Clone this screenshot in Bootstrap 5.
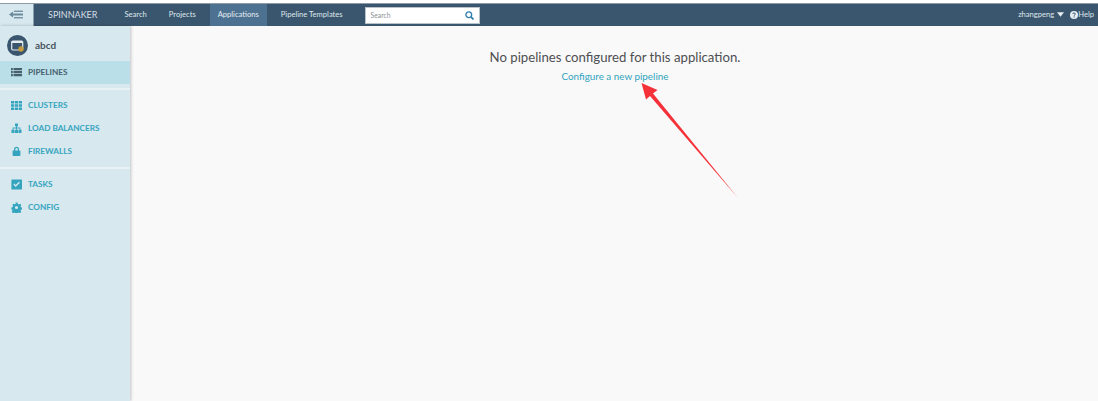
<!DOCTYPE html>
<html lang="en"><head><meta charset="utf-8"><title>Spinnaker</title>
<link rel="stylesheet" href="https://cdn.jsdelivr.net/npm/bootstrap@5.3.0/dist/css/bootstrap.min.css">
<style>
html,body{height:100%;margin:0;overflow:hidden;background:#fff;font-family:"Lato",sans-serif}
.shell{height:401px;padding-top:3px;position:relative}
.topbar{height:23px;background:#3a566e;border-top:1px solid #8b9aa6}
.toggler{width:34px;background:#d7e8ee;margin-top:-1px;border-right:1px solid #8aa0ae}
.brand{font-size:9px;color:#d5dee5;margin:0 16px 0 14px}
.topitem{font-size:7.6px;color:#dfe6eb;padding:0 8px;margin:0 3px;display:flex;align-items:center;height:100%;text-decoration:none}
.topitem.on{background:#4c7191;color:#e6edf2}
.searchbox{width:115px;height:17px;background:#fff;margin-left:11px;border:1px solid #b7c2ca;padding:0 5px;font-size:6.8px;color:#8b8f93}
.userbox{font-size:7.6px;color:#dfe6eb;margin-left:auto;padding-right:4px;gap:3px}
.helpmark{margin-left:3px;margin-right:-3px}
.bodyrow{height:375px}
.sidemenu{width:130px;background:#d7e8ee;box-shadow:1px 0 3px rgba(0,0,0,.22);z-index:1;flex:none}
.apphead{height:35px;padding:9px 0 0 7px;gap:7px;font-size:10px;font-weight:700;color:#4a5760}
.appicon{width:21px;height:21px;border-radius:50%;background:#3a566e}
.sideitem{height:23px;padding-left:11px;gap:6px;font-size:8.2px;font-weight:700;color:#35a5bf;text-decoration:none}
.sideitem.on{background:#badfe8;color:#47606f}
.sideitem svg{width:11px;height:11px;flex:none;fill:currentColor}
.rule{height:2px;background:#e8f2f5;margin:4px 0}
.mainpane{background:#f9f9f9;position:relative;padding-left:2px}
.emptymsg{font-size:13.2px;color:#4d4f52;padding-top:21px;line-height:20px}
.newlink{font-size:9.85px;color:#2fa3bd;text-decoration:none;line-height:16px;margin-top:1px}
.arrowmark{position:absolute;left:510px;top:55px;width:100px;height:120px}
</style></head>
<body>
<div class="shell">
<nav class="topbar d-flex align-items-center">
  <div class="toggler h-100 d-flex align-items-center justify-content-center flex-none">
    <svg width="15" height="9" viewBox="0 0 15 9" fill="#6b8a9c"><path d="M0 4.500 4 1.500V3.600H14V5.400H4V7.500Z"/><rect x="5" y="0.600" width="9" height="1.300"/><rect x="5" y="7.100" width="9" height="1.300"/></svg>
  </div>
  <span class="brand">SPINNAKER</span>
  <a class="topitem" href="#">Search</a>
  <a class="topitem" href="#">Projects</a>
  <a class="topitem on" href="#">Applications</a>
  <a class="topitem" href="#">Pipeline Templates</a>
  <div class="searchbox d-flex align-items-center justify-content-between">
    <span>Search</span>
    <svg width="9" height="9" viewBox="0 0 10 10" fill="none" stroke="#2f7fb0" stroke-width="1.5"><circle cx="4.200" cy="4.200" r="3.200"/><path d="M6.600 6.600 9.400 9.400" stroke-width="2"/></svg>
  </div>
  <div class="userbox d-flex align-items-center">
    <span>zhangpeng</span>
    <svg width="7" height="5" viewBox="0 0 8 5" fill="#e6edf2"><path d="M0 0H8L4 5Z"/></svg>
    <svg class="helpmark" width="8" height="8" viewBox="0 0 10 10"><circle cx="5" cy="5" r="5" fill="#e6edf2"/><path d="M3.400 3.800C3.500 2.800 4.200 2.400 5 2.400 6 2.400 6.700 3 6.700 3.800 6.700 4.900 5.100 4.900 5.100 6" fill="none" stroke="#3a566e" stroke-width="1.200"/><rect x="4.400" y="6.800" width="1.400" height="1.300" fill="#3a566e"/></svg>
    <span>Help</span>
  </div>
</nav>
<div class="bodyrow d-flex">
  <aside class="sidemenu">
    <div class="apphead d-flex align-items-start">
      <div class="appicon d-flex align-items-center justify-content-center flex-none">
        <svg width="13" height="12" viewBox="0 0 13 12"><rect x=".7" y="1" width="11" height="9" rx="1.200" fill="none" stroke="#e4ecf0" stroke-width="1.200"/><rect x="1" y="1" width="10.500" height="2" fill="#e4ecf0"/><circle cx="10" cy="9" r="2.700" fill="#c79a3c"/></svg>
      </div>
      <span style="line-height:21px">abcd</span>
    </div>
    <a href="#" class="sideitem on d-flex align-items-center">
      <svg viewBox="0 0 11 11"><path d="M0 1h1.800v2.200H0zM2.500 1H11v2.200H2.500zM0 4h1.800v2.200H0zM2.500 4H11v2.200H2.500zM0 7h1.800v2.200H0zM2.500 7H11v2.200H2.500z"/></svg>PIPELINES</a>
    <div class="rule"></div>
    <a href="#" class="sideitem d-flex align-items-center">
      <svg viewBox="0 0 11 11"><path d="M0 1h3.200v2.600H0zM3.900 1h3.200v2.600H3.900zM7.800 1H11v2.600H7.800zM0 4.200h3.200v2.600H0zM3.900 4.200h3.200v2.600H3.900zM7.800 4.200H11v2.600H7.800zM0 7.400h3.200V10H0zM3.900 7.400h3.200V10H3.900zM7.800 7.400H11V10H7.800z"/></svg>CLUSTERS</a>
    <a href="#" class="sideitem d-flex align-items-center">
      <svg viewBox="0 0 11 11"><path d="M4 .5h3v2.800H6v1.300h3.400v2.200h1.100V10h-3V6.800h1.100V5.400H5.900v1.400H7V10H4V6.800h1.100V5.400H2.400v1.400h1.100V10h-3V6.800h1.100V4.600H5V3.300H4z"/></svg>LOAD BALANCERS</a>
    <a href="#" class="sideitem d-flex align-items-center">
      <svg viewBox="0 0 11 11"><path d="M3 4.500V3.200a2.500 2.500 0 0 1 5 0v1.300h.7c.4 0 .7.300.7.700v4.100c0 .4-.3.700-.7.700H2.300c-.4 0-.7-.3-.7-.7V5.200c0-.4.300-.7.700-.7zM4.300 4.500h2.400V3.200a1.200 1.200 0 0 0-2.400 0z"/></svg>FIREWALLS</a>
    <div class="rule"></div>
    <a href="#" class="sideitem d-flex align-items-center">
      <svg viewBox="0 0 11 11"><path fill-rule="evenodd" d="M1 .5h9.400c.3 0 .6.300.6.600v8.800c0 .3-.3.600-.6.600H1c-.3 0-.6-.3-.6-.6V1.100C.4.800.7.500 1 .5zM2.400 5.500 4.700 8l4.200-4.300-1-.9L4.700 6 3.400 4.600z"/></svg>TASKS</a>
    <a href="#" class="sideitem d-flex align-items-center">
      <svg viewBox="0 0 11 11"><path fill-rule="evenodd" d="M4.500.5h2l.3 1.400 1 .5 1.300-.6 1.200 1.200-.8 1.200.4 1 1.300.4v1.800l-1.300.4-.4 1 .8 1.200-1.200 1.200-1.300-.7-1 .4-.3 1.400h-2l-.3-1.400-1-.4-1.200.7-1.300-1.200.8-1.200-.4-1L.4 7.300V5.500l1.300-.4.400-1-.8-1.200 1.300-1.200 1.200.6 1-.5zM5.500 3.900a1.600 1.600 0 1 0 0 3.200 1.600 1.600 0 0 0 0-3.200z"/></svg>CONFIG</a>
  </aside>
  <main class="mainpane flex-grow-1 d-flex flex-column align-items-center">
    <div class="emptymsg">No pipelines configured for this application.</div>
    <a class="newlink" href="#">Configure a new pipeline</a>
    <svg class="arrowmark" viewBox="0 0 100 120"><path d="M1.500 2 17.500 9 13 12.500 98 117 10 15 6 18.500Z" fill="#f5323a"/></svg>
  </main>
</div>
</div>
<script src="https://cdn.jsdelivr.net/npm/bootstrap@5.3.0/dist/js/bootstrap.bundle.min.js"></script>
</body></html>
